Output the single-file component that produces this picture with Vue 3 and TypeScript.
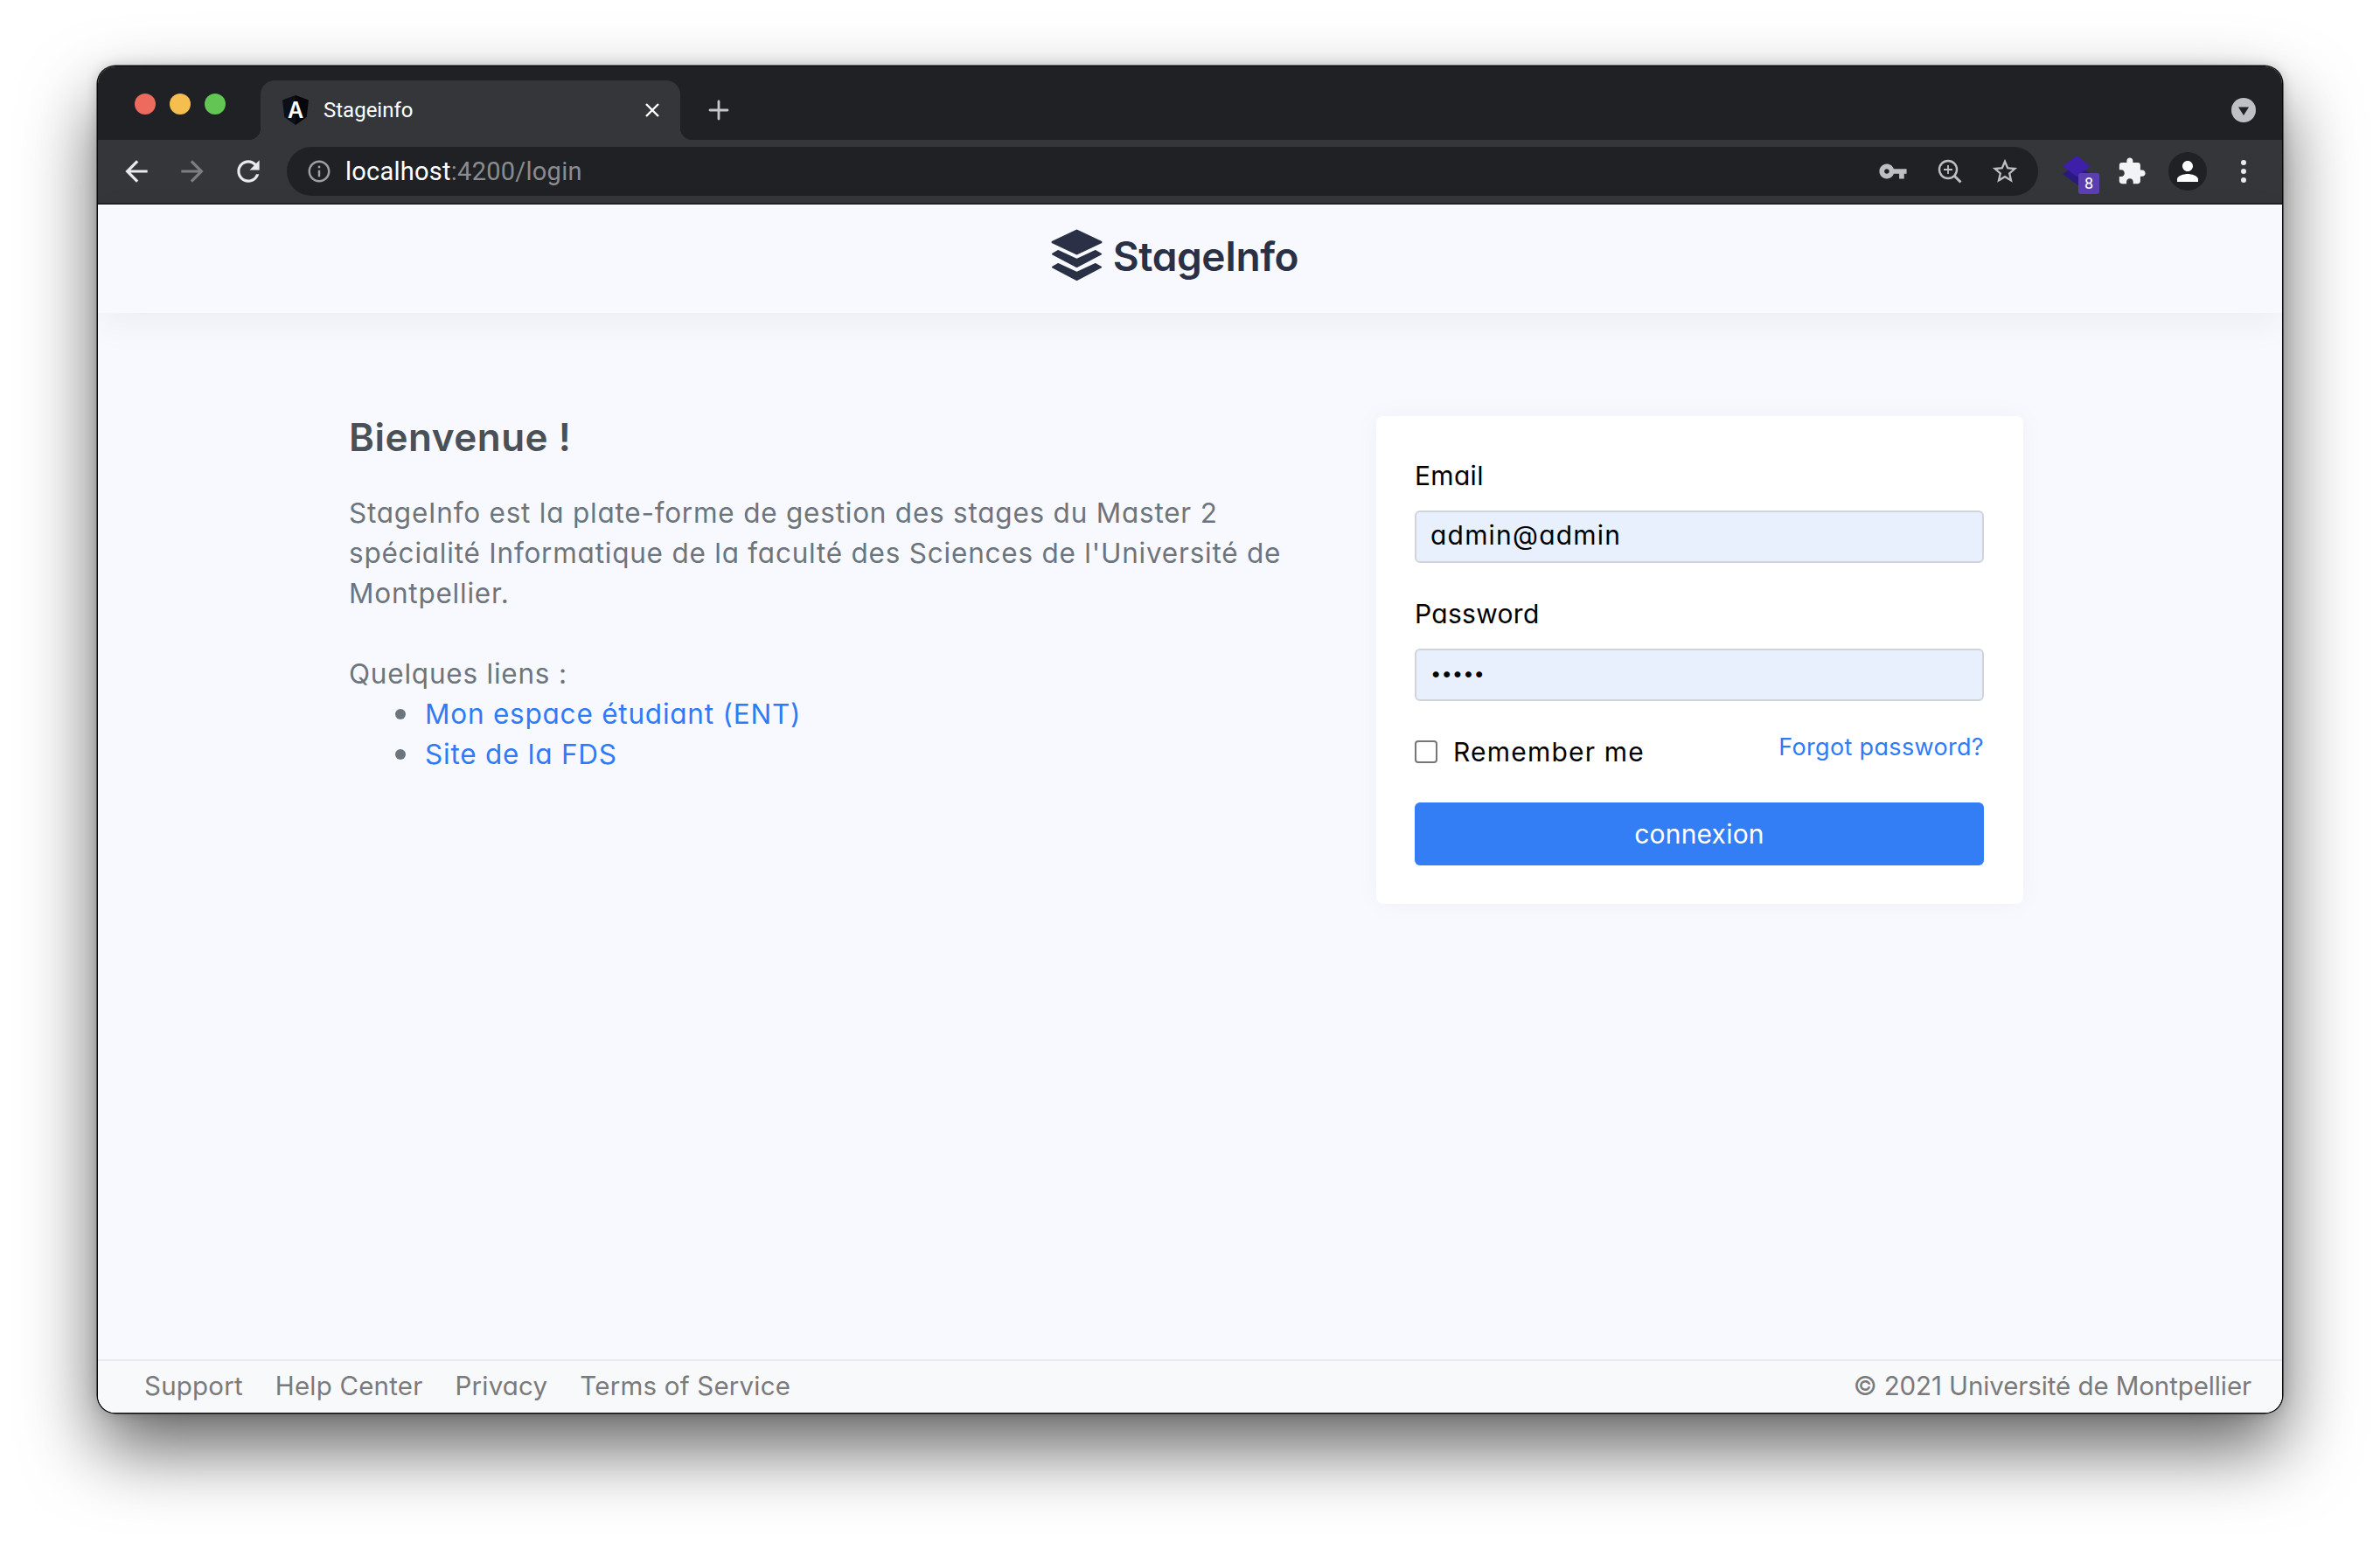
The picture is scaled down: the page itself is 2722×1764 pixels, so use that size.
<template>
  <div class="screen">
    <div class="window">
      <!-- Tab strip -->
      <div class="tabstrip">
        <div class="lights">
          <span class="light light--red"></span>
          <span class="light light--yellow"></span>
          <span class="light light--green"></span>
        </div>
        <div class="tab">
          <svg class="favicon" viewBox="0 0 32 34">
            <path d="M16 0 1 5.5 3.3 25 16 34z" fill="#0c0f18" />
            <path d="M16 0l15 5.5L28.700 25 16 34z" fill="#05070d" />
            <text x="16" y="26" text-anchor="middle" font-family="Inter, sans-serif" font-size="25" font-weight="600" fill="#fff">A</text>
          </svg>
          <span class="tab-title">Stageinfo</span>
          <svg class="tab-close" viewBox="0 0 16 16">
            <path d="M1 1l14 14M15 1 1 15" stroke="#fff" stroke-width="2.400" fill="none" />
          </svg>
        </div>
        <svg class="new-tab" viewBox="0 0 24 24">
          <path d="M12 2v20M2 12h20" stroke="#c4c7cc" stroke-width="2.800" stroke-linecap="round" fill="none" />
        </svg>
        <div class="tab-search">
          <svg viewBox="0 0 28 28" width="28" height="28">
            <circle cx="14" cy="14" r="14" fill="#bdc1c6" />
            <path d="M8 10.500h12L14 20z" fill="#202124" />
          </svg>
        </div>
      </div>

      <!-- Toolbar -->
      <div class="toolbar">
        <svg class="nav-icon" viewBox="0 0 24 24"><path d="M20 11H7.830l5.590-5.590L12 4l-8 8 8 8 1.410-1.410L7.830 13H20v-2z" fill="#e8eaed" /></svg>
        <svg class="nav-icon" viewBox="0 0 24 24"><path d="M4 11h12.170l-5.590-5.590L12 4l8 8-8 8-1.410-1.410L16.170 13H4v-2z" fill="#7c7e82" /></svg>
        <svg class="nav-icon nav-icon--last" viewBox="0 0 24 24"><path d="M17.650 6.350C16.200 4.900 14.210 4 12 4c-4.420 0-7.990 3.580-7.990 8s3.570 8 7.990 8c3.730 0 6.840-2.550 7.730-6h-2.080c-.82 2.330-3.040 4-5.650 4-3.310 0-6-2.690-6-6s2.690-6 6-6c1.660 0 3.140.69 4.220 1.780L13 11h7V4l-2.350 2.350z" fill="#e8eaed" /></svg>
        <div class="omnibox">
          <svg class="info-icon" viewBox="0 0 24 24"><path d="M11 7h2v2h-2zm0 4h2v6h-2zm1-9C6.480 2 2 6.480 2 12s4.480 10 10 10 10-4.480 10-10S17.520 2 12 2zm0 18c-4.410 0-8-3.590-8-8s3.590-8 8-8 8 3.590 8 8-3.590 8-8 8z" fill="#9aa0a6" /></svg>
          <span class="url"><span class="url-host">localhost</span>:4200/login</span>
          <svg class="omni-icon omni-icon--key" viewBox="0 0 24 24"><path d="M12.650 10C11.830 7.670 9.610 6 7 6c-3.310 0-6 2.690-6 6s2.690 6 6 6c2.610 0 4.830-1.670 5.650-4H17v4h4v-4h2v-4H12.650zM7 14c-1.100 0-2-.9-2-2s.9-2 2-2 2 .9 2 2-.9 2-2 2z" fill="#bdbfc2" /></svg>
          <svg class="omni-icon omni-icon--zoom" viewBox="0 0 34 34">
            <circle cx="16" cy="15" r="10" stroke="#bdbfc2" stroke-width="2.400" fill="none" />
            <path d="M16 10v10M11 15h10" stroke="#bdbfc2" stroke-width="1.800" fill="none" />
            <path d="M23.500 22.500 30.500 29.500" stroke="#bdbfc2" stroke-width="3" fill="none" />
          </svg>
          <svg class="omni-icon omni-icon--star" viewBox="0 0 24 24"><path d="M22 9.240l-7.190-.62L12 2 9.190 8.630 2 9.240l5.460 4.730L5.820 21 12 17.270 18.180 21l-1.630-7.030L22 9.240zM12 15.400l-3.760 2.270 1-4.280-3.320-2.880 4.380-.38L12 6.100l1.710 4.040 4.380.38-3.320 2.880 1 4.280L12 15.400z" fill="#bdbfc2" /></svg>
        </div>
        <div class="ext-stack">
          <svg viewBox="0 0 32 36" width="32" height="36">
            <path d="M16 10 32 21 18 34 0 21z" fill="#2a1a80" />
            <path d="M16 0 32 12 16 24 0 12z" fill="#3d1fa8" />
          </svg>
          <span class="ext-badge">8</span>
        </div>
        <svg class="puzzle" viewBox="0 0 24 24"><path d="M20.500 11H19V7c0-1.100-.9-2-2-2h-4V3.500C13 2.120 11.880 1 10.500 1S8 2.120 8 3.500V5H4c-1.100 0-1.990.9-1.990 2v3.800H3.500c1.490 0 2.700 1.210 2.700 2.700s-1.210 2.700-2.700 2.700H2V20c0 1.100.9 2 2 2h3.800v-1.500c0-1.490 1.210-2.700 2.700-2.700 1.490 0 2.700 1.210 2.700 2.700V22H17c1.100 0 2-.9 2-2v-4h1.500c1.380 0 2.500-1.120 2.500-2.500S21.880 11 20.500 11z" fill="#f1f3f4" /></svg>
        <div class="avatar">
          <svg viewBox="0 0 24 24" width="36" height="36"><path d="M12 12c2.210 0 4-1.790 4-4s-1.790-4-4-4-4 1.790-4 4 1.790 4 4 4zm0 2c-2.670 0-8 1.340-8 4v2h16v-2c0-2.660-5.330-4-8-4z" fill="#fff" /></svg>
        </div>
        <div class="menu-dots"><span></span><span></span><span></span></div>
      </div>

      <!-- Page -->
      <div class="page">
        <header class="page-header">
          <svg class="logo-icon" viewBox="0 0 59 59">
            <path d="M29.500 2 57 15 29.500 28 2 15z" fill="#2a3045" stroke="#2a3045" stroke-width="3" stroke-linejoin="round" />
            <path d="M8 25 29.500 35 51 25l6 3.500L29.500 43 2 28.500z" fill="#2a3045" stroke="#2a3045" stroke-width="2" stroke-linejoin="round" />
            <path d="M8 40 29.500 50 51 40l6 3.500L29.500 58 2 43.500z" fill="#2a3045" stroke="#2a3045" stroke-width="2" stroke-linejoin="round" />
          </svg>
          <span class="logo-text">StageInfo</span>
        </header>

        <main class="page-main">
          <section class="welcome">
            <h1 class="welcome-title">Bienvenue !</h1>
            <p class="welcome-text">
              StageInfo est la plate-forme de gestion des stages du Master 2 spécialité Informatique de la faculté des Sciences de l'Université de Montpellier.
            </p>
            <p class="welcome-links">Quelques liens :</p>
            <ul class="links">
              <li v-for="link in links" :key="link"><a href="#">{{ link }}</a></li>
            </ul>
          </section>

          <form class="login-card" @submit.prevent>
            <label class="field-label" for="email">Email</label>
            <input id="email" class="field-input" type="text" value="admin@admin" />
            <label class="field-label field-label--second" for="password">Password</label>
            <input id="password" class="field-input field-input--secret" type="password" value="admin" />
            <div class="form-row">
              <label class="remember">
                <input type="checkbox" />
                <span>Remember me</span>
              </label>
              <a href="#" class="forgot">Forgot password?</a>
            </div>
            <button class="submit" type="submit">connexion</button>
          </form>
        </main>

        <footer class="page-footer">
          <nav class="footer-links">
            <a v-for="item in footerLinks" :key="item" href="#">{{ item }}</a>
          </nav>
          <span class="copyright">© 2021 Université de Montpellier</span>
        </footer>
      </div>
    </div>
  </div>
</template>

<script setup lang="ts">
const links: string[] = ['Mon espace étudiant (ENT)', 'Site de la FDS'];
const footerLinks: string[] = ['Support', 'Help Center', 'Privacy', 'Terms of Service'];
</script>

<style>
html,
body {
  margin: 0;
  background: #fff;
}
</style>

<style scoped>
.screen {
  width: 2722px;
  height: 1764px;
  padding: 76px 112px 148px;
  box-sizing: border-box;
  overflow: hidden;
  font-family: Inter, "Noto Sans", sans-serif;
  font-feature-settings: "cv11";
}

.window {
  height: 100%;
  display: flex;
  flex-direction: column;
  border-radius: 20px;
  overflow: hidden;
  box-shadow: 0 0 0 1.500px #0a0a0a, 0 40px 84px rgba(0, 0, 0, 0.62), 0 0 16px rgba(0, 0, 0, 0.2);
}

/* Tab strip */
.tabstrip {
  height: 84px;
  flex: none;
  background: #202124;
  display: flex;
  align-items: flex-end;
  box-sizing: border-box;
}

.lights {
  display: flex;
  gap: 16px;
  align-self: flex-start;
  margin: 31px 0 0 42px;
}

.light {
  width: 24px;
  height: 24px;
  border-radius: 50%;
}

.light--red { background: #ed6a5e; }
.light--yellow { background: #f5bf4f; }
.light--green { background: #62c554; }

.tab {
  position: relative;
  width: 480px;
  height: 68px;
  margin-left: 40px;
  background: #35363a;
  border-radius: 16px 16px 0 0;
  display: flex;
  align-items: center;
  padding: 0 24px;
  box-sizing: border-box;
}

.tab::before,
.tab::after {
  content: "";
  position: absolute;
  bottom: 0;
  width: 14px;
  height: 14px;
}

.tab::before {
  left: -14px;
  background: radial-gradient(circle at 0 0, transparent 14px, #35363a 14.500px);
}

.tab::after {
  right: -14px;
  background: radial-gradient(circle at 100% 0, transparent 14px, #35363a 14.500px);
}

.favicon {
  width: 32px;
  height: 34px;
  flex: none;
}

.tab-title {
  margin-left: 16px;
  font: 400 24px Roboto, sans-serif;
  color: #fff;
}

.tab-close {
  width: 16px;
  height: 16px;
  margin-left: auto;
}

.new-tab {
  width: 24px;
  height: 24px;
  margin: 0 0 22px 32px;
}

.tab-search {
  margin: 0 30px 20px auto;
  height: 28px;
}

/* Toolbar */
.toolbar {
  height: 74px;
  flex: none;
  background: #35363a;
  border-bottom: 2px solid #202124;
  box-sizing: border-box;
  display: flex;
  align-items: center;
  padding-left: 25px;
}

.nav-icon {
  width: 38px;
  height: 38px;
  margin-right: 26px;
  flex: none;
}

.nav-icon--last {
  margin-right: 25px;
}

.omnibox {
  width: 2003px;
  height: 56px;
  border-radius: 28px;
  background: #202124;
  display: flex;
  align-items: center;
  padding: 0 21px 0 22px;
  box-sizing: border-box;
  flex: none;
}

.info-icon {
  width: 30px;
  height: 30px;
}

.url {
  margin-left: 15px;
  font: 400 29px Roboto, sans-serif;
  letter-spacing: 0.25px;
  color: #8a8c90;
}

.url-host {
  color: #fff;
}

.omni-icon {
  width: 34px;
  height: 34px;
  flex: none;
}

.omni-icon--key {
  margin-left: auto;
}

.omni-icon--zoom,
.omni-icon--star {
  margin-left: 30px;
}

.ext-stack {
  position: relative;
  width: 32px;
  height: 36px;
  margin-left: 28px;
  flex: none;
}

.ext-badge {
  position: absolute;
  left: 18px;
  top: 20px;
  width: 24px;
  height: 24px;
  border-radius: 3px;
  background: #5b3fb0;
  color: #fff;
  font: 400 18px/24px Roboto, sans-serif;
  text-align: center;
}

.puzzle {
  width: 34px;
  height: 34px;
  margin-left: 30px;
  flex: none;
}

.avatar {
  width: 44px;
  height: 44px;
  margin-left: 25px;
  border-radius: 50%;
  background: #202124;
  display: flex;
  align-items: center;
  justify-content: center;
  flex: none;
}

.menu-dots {
  display: flex;
  flex-direction: column;
  gap: 4px;
  margin-left: 39px;
  flex: none;
}

.menu-dots span {
  width: 6px;
  height: 6px;
  border-radius: 50%;
  background: #e8eaed;
}

/* Page */
.page {
  flex: 1;
  min-height: 0;
  background: #f8f9fe;
  display: flex;
  flex-direction: column;
}

.page-header {
  height: 124px;
  flex: none;
  display: flex;
  align-items: center;
  justify-content: center;
  gap: 12px;
  padding: 0 35px 6px 0;
  box-shadow: 0 12px 40px rgba(0, 0, 0, 0.05);
  box-sizing: border-box;
}

.logo-icon {
  width: 59px;
  height: 59px;
  margin-top: -4px;
  flex: none;
}

.logo-text {
  font-size: 46px;
  font-weight: 600;
  letter-spacing: -0.4px;
  color: #2a3045;
}

.page-main {
  flex: 1;
  min-height: 0;
  display: flex;
  justify-content: space-between;
  align-items: flex-start;
  padding: 116px 296px 0 287px;
}

.welcome {
  width: 1100px;
}

.welcome-title {
  margin: 0 0 38px;
  font-size: 44px;
  line-height: 52px;
  font-weight: 560;
  letter-spacing: 0.5px;
  color: #495057;
}

.welcome-text,
.welcome-links,
.links {
  margin: 0;
  font-size: 31.500px;
  line-height: 46px;
  letter-spacing: 0.78px;
  color: #6c757d;
}

.welcome-links {
  margin-top: 46px;
}

.links {
  padding: 0 0 0 53px;
  list-style: none;
}

.links li {
  display: flex;
  align-items: center;
}

.links li::before {
  content: "";
  width: 12px;
  height: 12px;
  margin-right: 22px;
  border-radius: 50%;
  background: #6c757d;
}

.links a {
  color: #2f7bf5;
  text-decoration: none;
}

.login-card {
  width: 740px;
  height: 558px;
  margin-top: 2px;
  background: #fff;
  border-radius: 8px;
  box-shadow: 0 0 30px rgba(40, 50, 90, 0.04);
  padding: 46px 45px 44px 44px;
  box-sizing: border-box;
  display: flex;
  flex-direction: column;
}

.field-label {
  font-size: 30px;
  line-height: 44px;
  letter-spacing: 0.3px;
  color: #000;
}

.field-label--second {
  margin-top: 36px;
}

.field-input {
  height: 60px;
  margin-top: 18px;
  padding: 0 16px 5px;
  box-sizing: border-box;
  background: #e8f0fe;
  border: 2px solid #ced4da;
  border-radius: 6px;
  font: 400 30px Inter, sans-serif;
  font-feature-settings: "cv11";
  letter-spacing: 1.2px;
  color: #000;
  outline: none;
}

.field-input--secret {
  font-size: 22px;
  letter-spacing: 0;
}

.form-row {
  display: flex;
  justify-content: space-between;
  align-items: flex-start;
  margin-top: 41px;
}

.remember {
  display: flex;
  align-items: center;
  gap: 18px;
  font-size: 30px;
  line-height: 34px;
  letter-spacing: 1.2px;
  color: #000;
}

.remember input {
  appearance: none;
  width: 26px;
  height: 26px;
  margin: 0;
  border: 2px solid #767676;
  border-radius: 4px;
  background: #fff;
}

.forgot {
  margin-top: -1px;
  font-size: 27px;
  line-height: 26px;
  letter-spacing: 0.33px;
  color: #2f7bf5;
  text-decoration: none;
}

.submit {
  height: 72px;
  margin-top: auto;
  background: #337ef5;
  border: none;
  border-radius: 6px;
  color: #fff;
  font: 400 30px Inter, sans-serif;
  font-feature-settings: "cv11";
  letter-spacing: 0.2px;
}

.page-footer {
  height: 61px;
  flex: none;
  border-top: 2px solid #e3ebf0;
  background: #f8f9fb;
  display: flex;
  align-items: center;
  justify-content: space-between;
  padding: 0 35px 3px 53px;
  box-sizing: border-box;
  font-size: 29.500px;
  color: #7a7a7a;
}

.footer-links {
  display: flex;
  gap: 37px;
  letter-spacing: 0.2px;
}

.footer-links a {
  color: inherit;
  text-decoration: none;
}

.copyright {
  letter-spacing: -0.1px;
}
</style>
